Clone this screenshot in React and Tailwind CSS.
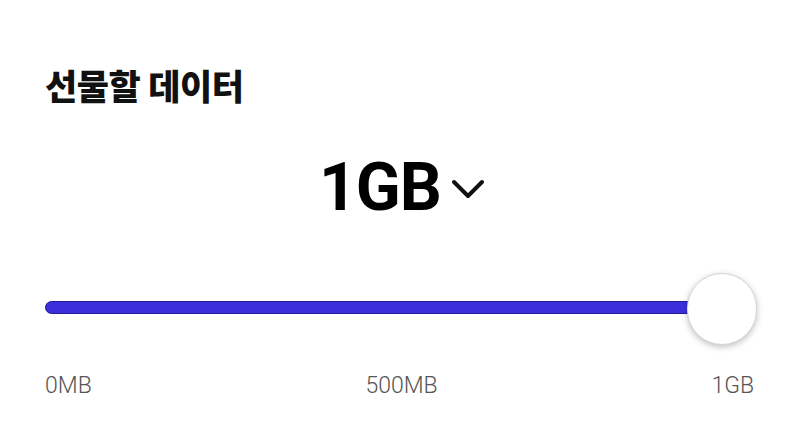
const labels = ['0MB', '500MB', '1GB']

const App = () => {
  return (
    <div className="w-[800px] h-[441px] bg-white px-[45px] pt-[64px]" style={{ fontFamily: 'Roboto, "Noto Sans CJK KR", sans-serif' }}>
      <h1 className="text-[35px] leading-[50px] font-black text-[#111] tracking-[-0.5px]">선물할 데이터</h1>

      <div className="flex items-center justify-center mt-[42px] h-[64px] pl-[4px]">
        <span className="text-[66px] leading-none font-bold text-black tracking-[-1px]">1GB</span>
        <svg className="ml-[10px] mt-[2px]" width="34" height="22" viewBox="0 0 34 22" fill="none">
          <path d="M3 4 L17 18 L31 4" stroke="#111" strokeWidth="4" strokeLinecap="round" strokeLinejoin="round" />
        </svg>
      </div>

      <div className="relative mt-[53px] h-[72px] flex items-center">
        <div className="h-[13px] w-[660px] rounded-full bg-[#3b2fdc] border border-[#241a9a] -mt-[4px]" />
        <div className="absolute left-[642px] top-0 w-[70px] h-[72px] rounded-full bg-white border border-[#d6d6d6] shadow-[0_2px_6px_rgba(0,0,0,0.25)]" />
      </div>

      <div className="flex justify-between mt-[27px] pr-[1px]">
        {labels.map((label) => (
          <span key={label} className="text-[23px] leading-[28px] text-[#555] font-light">
            {label}
          </span>
        ))}
      </div>
    </div>
  )
}

export default App
